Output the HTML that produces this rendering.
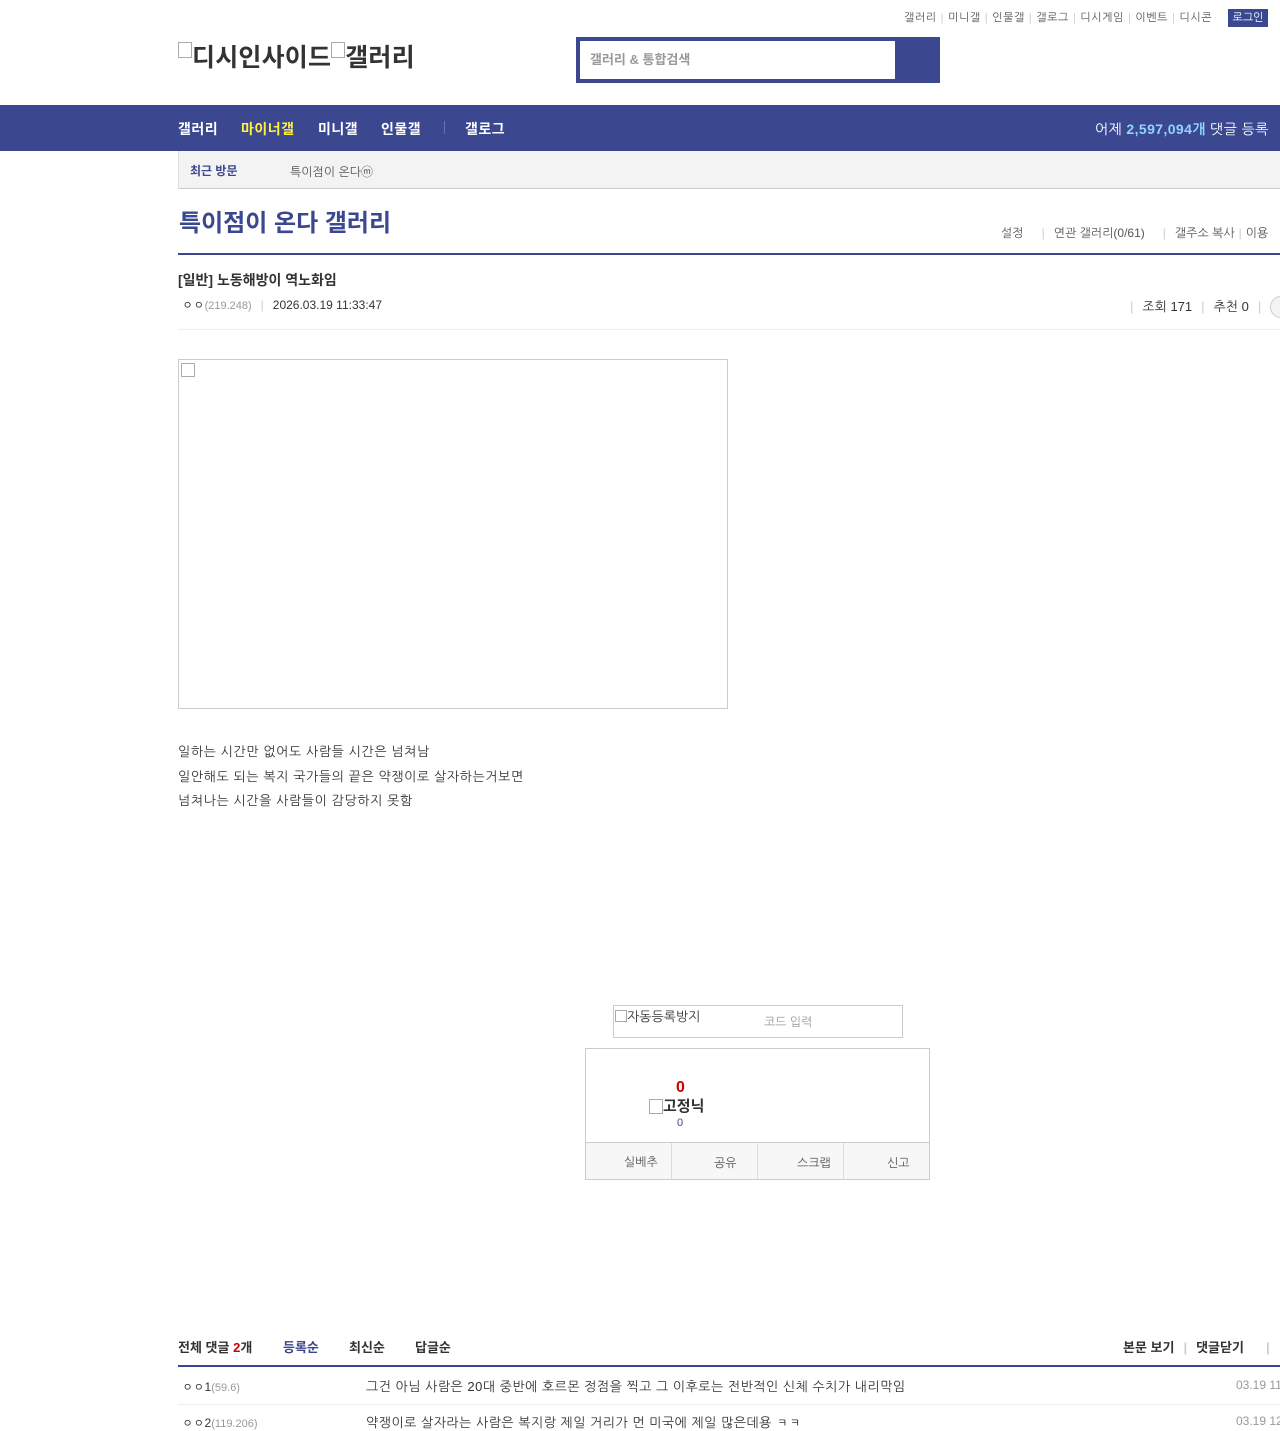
<!DOCTYPE html>
<html><head><meta charset="utf-8">
<style>
*{margin:0;padding:0;box-sizing:border-box}
body{width:1280px;height:1429px;background:#fff;font-family:"Liberation Sans","NanumGothic","Noto Sans CJK KR",sans-serif;color:#333;position:relative;overflow:hidden;font-size:12px}
.a{position:absolute;white-space:nowrap}
.sep{color:#ccc;margin:0 4px}
.n{font-family:"Liberation Sans","Noto Sans CJK KR",sans-serif}
</style></head><body>
<div class="a" style="top:11px;left:904px;font-size:11px;color:#555;letter-spacing:0.55px">갤러리<span class="sep">|</span>미니갤<span class="sep">|</span>인물갤<span class="sep">|</span>갤로그<span class="sep">|</span>디시게임<span class="sep">|</span>이벤트<span class="sep">|</span>디시콘</div>
<div class="a" style="top:9px;left:1228px;width:40px;height:18px;background:#3b4890;color:#fff;font-size:11px;text-align:center;line-height:18px">로그인</div>
<div class="a n" style="top:38px;left:178px;font-size:25px;font-weight:bold;color:#333;letter-spacing:0.2px"><span style="display:inline-block;width:14px;height:16px;border:1px solid #aaa;vertical-align:top;margin-top:4px"></span>디시인사이드<span style="display:inline-block;width:14px;height:16px;border:1px solid #aaa;vertical-align:top;margin-top:4px"></span>갤러리</div>
<div class="a" style="top:37px;left:576px;width:364px;height:46px;background:#3b4890"></div>
<div class="a n" style="top:41px;left:580px;width:315px;height:38px;background:#fff;font-size:13px;font-weight:bold;color:#999;line-height:38px;padding-left:10px">갤러리 &amp; 통합검색</div>
<div class="a" style="top:105px;left:0;width:1280px;height:46px;background:#3b4890"></div>
<div class="a n" style="top:119px;left:178px;font-size:14px;font-weight:bold;color:#fff;letter-spacing:0.5px">갤러리</div>
<div class="a n" style="top:119px;left:241px;font-size:14px;font-weight:bold;color:#fff13b;letter-spacing:0.5px">마이너갤</div>
<div class="a n" style="top:119px;left:318px;font-size:14px;font-weight:bold;color:#fff;letter-spacing:0.5px">미니갤</div>
<div class="a n" style="top:119px;left:381px;font-size:14px;font-weight:bold;color:#fff;letter-spacing:0.5px">인물갤</div>
<div class="a" style="top:121px;left:444px;width:1px;height:13px;background:#6a75b0"></div>
<div class="a n" style="top:119px;left:465px;font-size:14px;font-weight:bold;color:#fff;letter-spacing:0.5px">갤로그</div>
<div class="a" style="top:121px;left:1095px;font-size:14px;color:#fff;letter-spacing:0.4px">어제 <b style="color:#8fd6ff">2,597,094개</b> 댓글 등록</div>
<div class="a" style="top:151px;left:178px;width:1102px;height:38px;background:#f3f3f3;border-left:1px solid #ddd;border-bottom:1px solid #ccc"></div>
<div class="a n" style="top:162px;left:190px;font-size:12px;font-weight:bold;color:#3b4890">최근 방문</div>
<div class="a" style="top:163px;left:290px;font-size:12px;color:#555">특이점이 온다ⓜ</div>
<div class="a n" style="top:203px;left:179px;font-size:24px;font-weight:bold;color:#3b4890">특이점이 온다 갤러리</div>
<div class="a" style="top:226px;left:1001px;font-size:12px;color:#555">설정<span class="sep" style="margin:0 9px 0 18px">|</span>연관 갤러리(0/61)<span class="sep" style="margin:0 9px 0 18px">|</span>갤주소 복사<span class="sep">|</span>이용</div>
<div class="a" style="top:253px;left:178px;width:1102px;height:2px;background:#3b4890"></div>
<div class="a n" style="top:270px;left:178px;font-size:14px;font-weight:bold;color:#333">[일반] 노동해방이 역노화임</div>
<div class="a" style="top:298px;left:182px;font-size:12px;color:#333">ㅇㅇ<span style="font-size:11px;color:#999">(219.248)</span><span class="sep" style="margin:0 9px">|</span>2026.03.19 11:33:47</div>
<div class="a" style="top:299px;left:1126px;font-size:13px;color:#333"><span class="sep" style="margin-right:9px">|</span>조회 171<span class="sep" style="margin:0 9px">|</span>추천 0<span class="sep" style="margin:0 9px">|</span></div>
<div class="a" style="top:296px;left:1270px;width:22px;height:22px;border:1px solid #ccc;border-radius:50%;background:#f3f3f3"></div>
<div class="a" style="top:329px;left:178px;width:1102px;height:1px;background:#eee"></div>
<div class="a" style="top:359px;left:178px;width:550px;height:350px;border:1px solid #ccc"></div>
<div class="a" style="top:363px;left:181px;width:14px;height:14px;border:1px solid #aaa"></div>
<div class="a" style="top:740px;left:178px;font-size:13px;line-height:24.5px;color:#333;letter-spacing:0.6px">일하는 시간만 없어도 사람들 시간은 넘쳐남<br>일안해도 되는 복지 국가들의 끝은 약쟁이로 살자하는거보면<br>넘쳐나는 시간을 사람들이 감당하지 못함</div>
<div class="a" style="top:1005px;left:613px;width:290px;height:33px;border:1px solid #ccc"></div>
<div class="a" style="top:1009px;left:615px;font-size:13px;color:#333"><span style="display:inline-block;width:12px;height:12px;border:1px solid #aaa;vertical-align:top;margin-top:1px"></span>자동등록방지</div>
<div class="a" style="top:1015px;left:764px;font-size:12px;color:#999">코드 입력</div>
<div class="a" style="top:1048px;left:585px;width:345px;height:132px;border:1px solid #ccc"></div>
<div class="a" style="top:1142px;left:586px;width:343px;height:37px;background:#f7f7f7;border-top:1px solid #ccc"></div>
<div class="a" style="top:1143px;left:671px;width:1px;height:36px;background:#ddd"></div>
<div class="a" style="top:1143px;left:757px;width:1px;height:36px;background:#ddd"></div>
<div class="a" style="top:1143px;left:843px;width:1px;height:36px;background:#ddd"></div>
<div class="a" style="top:1155px;left:624px;font-size:12px;color:#555">실베추</div>
<div class="a" style="top:1156px;left:714px;font-size:12px;color:#555">공유</div>
<div class="a" style="top:1156px;left:797px;font-size:12px;color:#555">스크랩</div>
<div class="a" style="top:1156px;left:887px;font-size:12px;color:#555">신고</div>
<div class="a" style="top:1079px;left:676px;font-size:16px;font-weight:bold;color:#c00">0</div>
<div class="a n" style="top:1095px;left:649px;font-size:15px;font-weight:bold;color:#333"><span style="display:inline-block;width:14px;height:15px;border:1px solid #aaa;vertical-align:top;margin-top:4px"></span>고정닉</div>
<div class="a" style="top:1117px;left:677px;font-size:11px;color:#3b4890">0</div>
<div class="a n" style="top:1337px;left:178px;font-size:13px;font-weight:bold;color:#333">전체 댓글 <span style="color:#c00">2</span>개</div>
<div class="a n" style="top:1337px;left:283px;font-size:13px;font-weight:bold;color:#3b4890">등록순</div>
<div class="a n" style="top:1337px;left:349px;font-size:13px;font-weight:bold;color:#333">최신순</div>
<div class="a n" style="top:1337px;left:415px;font-size:13px;font-weight:bold;color:#333">답글순</div>
<div class="a n" style="top:1337px;left:1123px;font-size:13px;font-weight:bold;color:#333">본문 보기<span class="sep" style="margin:0 9px">|</span>댓글닫기<span class="sep" style="margin-left:22px">|</span></div>
<div class="a" style="top:1365px;left:178px;width:1102px;height:2px;background:#3b4890"></div>
<div class="a" style="top:1380px;left:182px;font-size:12px;color:#333">ㅇㅇ1<span style="font-size:11px;color:#999">(59.6)</span></div>
<div class="a" style="top:1379px;left:366px;font-size:13px;color:#333;letter-spacing:0.5px">그건 아님 사람은 20대 중반에 호르몬 정점을 찍고 그 이후로는 전반적인 신체 수치가 내리막임</div>
<div class="a" style="top:1378px;left:1236px;font-size:12px;color:#999">03.19 11:</div>
<div class="a" style="top:1404px;left:178px;width:1102px;height:1px;background:#eee"></div>
<div class="a" style="top:1416px;left:182px;font-size:12px;color:#333">ㅇㅇ2<span style="font-size:11px;color:#999">(119.206)</span></div>
<div class="a" style="top:1415px;left:366px;font-size:13px;color:#333;letter-spacing:0.5px">약쟁이로 살자라는 사람은 복지랑 제일 거리가 먼 미국에 제일 많은데용 ㅋㅋ</div>
<div class="a" style="top:1414px;left:1236px;font-size:12px;color:#999">03.19 12:</div>
</body></html>
